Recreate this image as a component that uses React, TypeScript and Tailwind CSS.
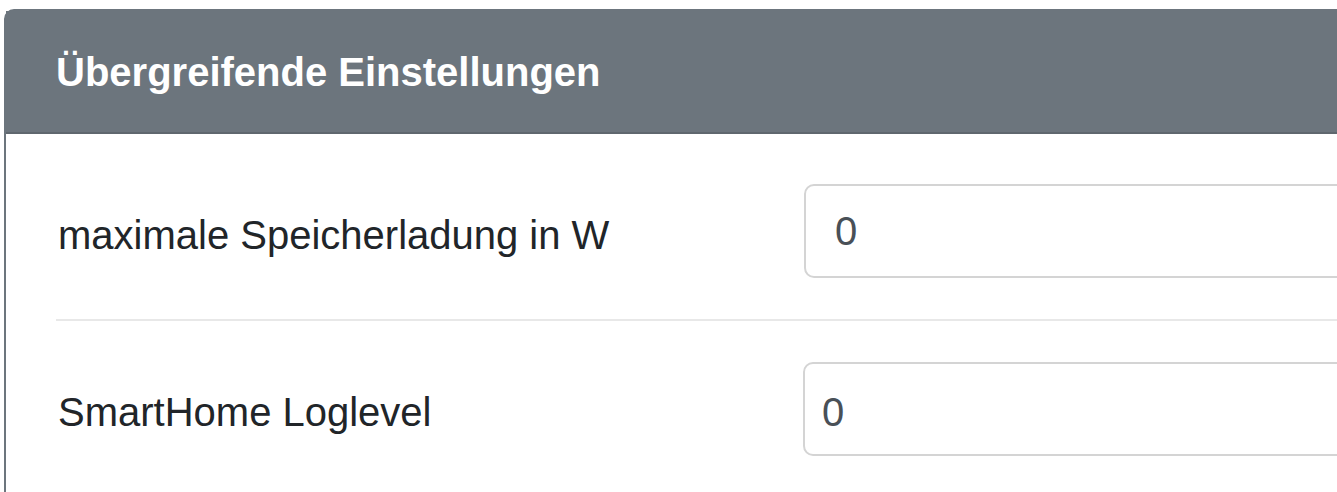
export default function App() {
  return (
    <div className="h-[492px] w-[1337px] overflow-hidden bg-white pl-[4px] pt-[9px] font-['Liberation_Sans',Arial,sans-serif]">
      <div className="w-[1420px] rounded-t-[10px] border-[2.5px] border-[#6c757d]">
        <div className="border-b-[2.5px] border-[#5f676e] bg-[#6c757d] px-[50px] pb-[30px] pt-[31px] text-[40px] font-bold leading-[60px] text-white">
          Übergreifende Einstellungen
        </div>
        <div className="p-[50px] pr-0 text-[40px] text-[#212529]">
          <div className="flex items-center">
            <label className="w-[748px] shrink-0 pl-[2px] pt-[8px]">maximale Speicherladung in W</label>
            <input
              readOnly
              value="0"
              className="h-[94px] flex-1 rounded-[10px] border-[2.5px] border-[#d4d4d4] bg-white pl-[29px] text-[40px] text-[#495057] outline-none"
            />
          </div>
          <hr className="my-[41px] border-t-[2.5px] border-[#e8e8e8]" />
          <div className="flex items-center">
            <label className="w-[747px] shrink-0 pl-[2px] pt-[6px]">SmartHome Loglevel</label>
            <input
              readOnly
              value="0"
              className="h-[94px] flex-1 rounded-[10px] border-[2.5px] border-[#d4d4d4] bg-white pl-[17px] pt-[6px] text-[40px] text-[#495057] outline-none"
            />
          </div>
        </div>
      </div>
    </div>
  );
}
